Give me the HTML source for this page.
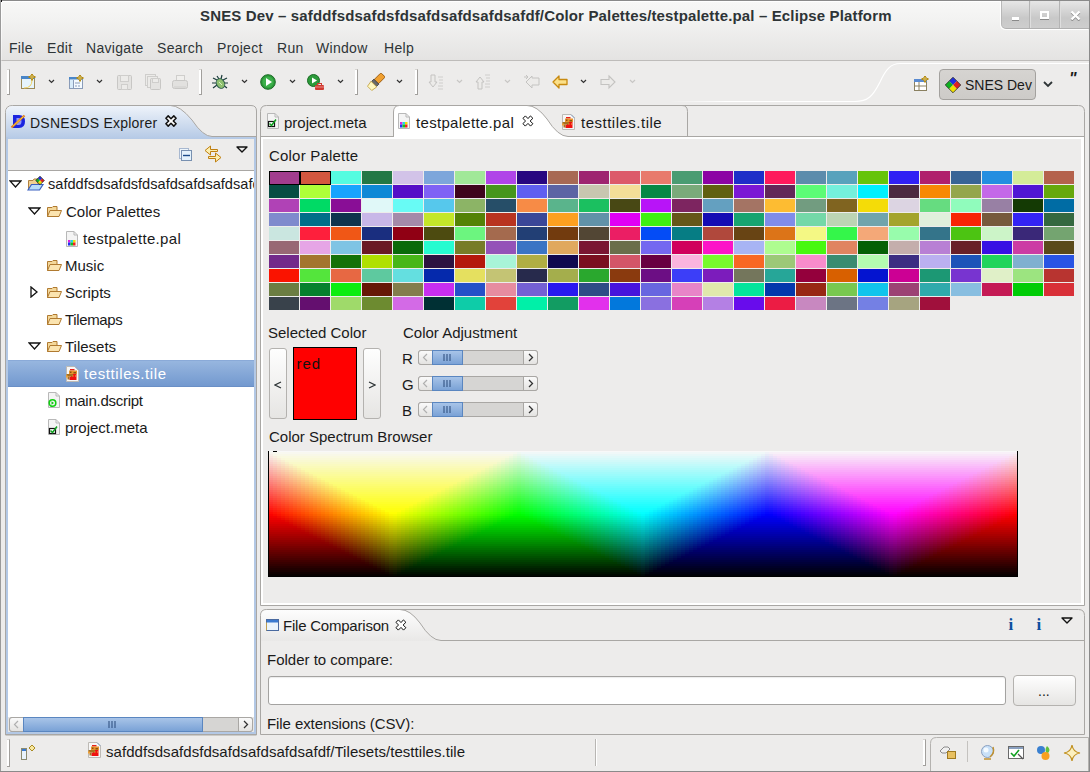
<!DOCTYPE html>
<html><head><meta charset="utf-8">
<style>
*{box-sizing:border-box}
html,body{margin:0;padding:0}
body{width:1090px;height:772px;overflow:hidden;position:relative;background:#edeceb;font-family:"Liberation Sans",sans-serif;font-size:14px;color:#1a1a1a}
.a{position:absolute}
.t{position:absolute;white-space:nowrap;line-height:1}
#hdr{left:0;top:0;width:1090px;height:61px;background:linear-gradient(#f8f8f7,#f2f2f1 35%,#e4e3e2);border-bottom:1px solid #bebcba}
#title{left:200px;top:8px;font-weight:bold;font-size:15px;letter-spacing:.15px;color:#2e3436}
#wbtn{left:1001px;top:0;width:88px;height:29px;border-left:1px solid #b8b8b8;border-bottom:1px solid #b0b0b0;border-bottom-left-radius:5px;background:linear-gradient(#e8e8e8,#c8c8c8 65%,#cdcdcd);box-shadow:-1px 1px 0 #fff}
.menu{top:41px;font-size:14px;letter-spacing:.3px;color:#2e3436}
.grip{width:3px;height:26px;border-right:1px solid #a19f9c;border-bottom:1px solid #a19f9c;background:#fff;border-top:1px solid #d8d6d3}
.tr{font-size:15px;color:#1a1a1a}
.btn{border:1px solid #b4b2af;border-radius:3px;background:linear-gradient(#fefefe,#e6e5e3)}
.grid i{position:absolute;width:30px;height:13px;display:block}
</style></head><body>
<div id="hdr" class="a"></div>
<div id="title" class="t">SNES Dev – safddfsdsafdsfdsafdsafdsafdsafdf/Color Palettes/testpalette.pal – Eclipse Platform</div>
<div id="wbtn" class="a"></div>
<div class="a" style="left:1029px;top:1px;width:1px;height:27px;background:#b4b4b4;box-shadow:1px 0 0 #dedede"></div>
<div class="a" style="left:1059px;top:1px;width:1px;height:27px;background:#b4b4b4;box-shadow:1px 0 0 #dedede"></div>
<div class="a" style="left:1012px;top:17px;width:7px;height:3px;background:#fff;box-shadow:0 1px 0 #8a8a8a"></div>
<div class="a" style="left:1040px;top:11px;width:9px;height:8px;border:2px solid #fff;box-shadow:0 1px 0 #8a8a8a"></div>
<svg class="a" style="left:1069.5px;top:10px" width="11" height="11"><path d="M1.5 2.5L9.5 10.5M9.5 2.5L1.5 10.5" stroke="#8a8a8a" stroke-width="2.4"/><path d="M1.5 1.5L9.5 9.5M9.5 1.5L1.5 9.5" stroke="#fff" stroke-width="2.4"/></svg>
<div class="a" style="left:0;top:0;width:1090px;height:1px;background:#8a8a8a"></div>
<div class="a" style="left:1px;top:1px;width:1000px;height:1px;background:#fff"></div>
<div class="a" style="left:1px;top:1px;width:1px;height:60px;background:linear-gradient(#fff,rgba(255,255,255,.3))"></div>
<div class="a" style="left:0;top:0;width:2px;height:2px;background:#111"></div>
<div class="t menu" style="left:9px">File</div>
<div class="t menu" style="left:47px">Edit</div>
<div class="t menu" style="left:86px">Navigate</div>
<div class="t menu" style="left:157px">Search</div>
<div class="t menu" style="left:217px">Project</div>
<div class="t menu" style="left:277px">Run</div>
<div class="t menu" style="left:316px">Window</div>
<div class="t menu" style="left:384px">Help</div>

<!-- toolbar -->
<div class="grip a" style="left:7px;top:69px"></div>
<div class="grip a" style="left:199px;top:69px"></div>
<div class="grip a" style="left:355px;top:69px"></div>
<div class="grip a" style="left:415px;top:69px"></div>
<svg class="a" style="left:20px;top:74px" width="17" height="16"><rect x="1.5" y="2.5" width="13" height="12" fill="#e6f4fc" stroke="#9c8a58"/><rect x="1" y="2" width="14" height="3" fill="#4a86c8"/><path d="M4 14Q12 14 12 6" stroke="#f0d060" fill="none"/><path d="M12 -.5Q12.5 2.5 15.5 3Q12.5 3.5 12 6.5Q11.5 3.5 8.5 3Q11.5 2.5 12 -.5Z" fill="#fbeeb0" stroke="#b38a12" stroke-width="1" stroke-linejoin="round"/><path d="M12 1V5M10 3H14" stroke="#b38a12" stroke-width=".8"/></svg>
<svg class="chev a" style="left:48px;top:79px" width="7" height="5"><path d="M1 1L3.5 3.5L6 1" stroke="#333" stroke-width="1.2" fill="none"/></svg>
<svg class="a" style="left:68px;top:75px" width="17" height="15"><rect x="1.5" y="2.5" width="13" height="11" fill="#f4faff" stroke="#8a9cb8"/><rect x="1" y="2" width="14" height="2.5" fill="#4a86c8"/><rect x="2" y="5" width="3" height="8" fill="#d8ecfa"/><path d="M5.5 5V13" stroke="#8a9cb8"/><path d="M7 8H12M7 11H9M10 11H12" stroke="#8a9cb8"/><path d="M12 -.5Q12.5 2.5 15.5 3Q12.5 3.5 12 6.5Q11.5 3.5 8.5 3Q11.5 2.5 12 -.5Z" fill="#fbeeb0" stroke="#b38a12" stroke-width="1" stroke-linejoin="round"/><path d="M12 1V5M10 3H14" stroke="#b38a12" stroke-width=".8"/></svg>
<svg class="chev a" style="left:96px;top:79px" width="7" height="5"><path d="M1 1L3.5 3.5L6 1" stroke="#333" stroke-width="1.2" fill="none"/></svg>
<svg class="a" style="left:117px;top:75px" width="16" height="15"><rect x=".5" y=".5" width="14" height="14" rx="1" fill="#e4e3e1" stroke="#c8c7c5"/><rect x="3.5" y=".5" width="8" height="6" fill="#ecebe9" stroke="#cfcecc"/><rect x="4.5" y="9.5" width="6" height="5" fill="#ecebe9" stroke="#cfcecc"/></svg>
<svg class="a" style="left:145px;top:74px" width="17" height="16"><rect x=".5" y=".5" width="10" height="11" fill="#ecebe9" stroke="#cfcecc"/><rect x="2.5" y="2.5" width="10" height="11" fill="#ecebe9" stroke="#cfcecc"/><rect x="5.5" y="4.5" width="10" height="11" rx="1" fill="#e4e3e1" stroke="#c8c7c5"/><rect x="7.5" y="4.5" width="6" height="4" fill="#ecebe9" stroke="#cfcecc"/></svg>
<svg class="a" style="left:172px;top:75px" width="17" height="15"><rect x="4.5" y=".5" width="8" height="7" fill="#f0efed" stroke="#cfcecc"/><rect x=".5" y="5.5" width="15" height="8" rx="2" fill="#e2e1df" stroke="#c8c7c5"/><path d="M2 12H14" stroke="#d0cfcd"/></svg>
<svg class="a" style="left:211px;top:74px" width="18" height="17"><g stroke="#1a3a3a" stroke-width="1.2"><path d="M2 4L6 6M1 9H5M2 14L6 11M16 4L12 6M17 9H13M16 14L12 11M6 2L8 5M11 1L10 5"/></g><ellipse cx="9.5" cy="9.5" rx="4" ry="5" fill="#8ec070" stroke="#2a5a4a" transform="rotate(-30 9.5 9.5)"/><path d="M8 8L11 11" stroke="#d8f0c0"/></svg>
<svg class="chev a" style="left:241px;top:79px" width="7" height="5"><path d="M1 1L3.5 3.5L6 1" stroke="#333" stroke-width="1.2" fill="none"/></svg>
<svg class="a" style="left:260px;top:74px" width="16" height="16"><circle cx="8" cy="8" r="7.3" fill="#2c9a3a" stroke="#1a6a24"/><circle cx="8" cy="8" r="5.5" fill="#3cb04a"/><path d="M6 4L12 8L6 12Z" fill="#fff"/></svg>
<svg class="chev a" style="left:289px;top:79px" width="7" height="5"><path d="M1 1L3.5 3.5L6 1" stroke="#333" stroke-width="1.2" fill="none"/></svg>
<svg class="a" style="left:307px;top:74px" width="18" height="17"><circle cx="6.5" cy="6.5" r="6" fill="#2c9a3a" stroke="#1a6a24"/><path d="M5 3.5L10 6.5L5 9.5Z" fill="#fff"/><rect x="8" y="11" width="9" height="5" rx="1" fill="#d03a30"/><path d="M8 13H17" stroke="#f0a0a0" stroke-width=".8"/><rect x="10.5" y="9.5" width="4" height="2" fill="none" stroke="#d03a30"/></svg>
<svg class="chev a" style="left:337px;top:79px" width="7" height="5"><path d="M1 1L3.5 3.5L6 1" stroke="#333" stroke-width="1.2" fill="none"/></svg>
<svg class="a" style="left:367px;top:73px" width="18" height="18"><g transform="rotate(45 9 9)"><rect x="6" y="-1" width="6" height="10" rx="1" fill="#f0a030" stroke="#9a5a10" stroke-width=".9"/><rect x="5.5" y="8.5" width="7" height="3.5" fill="#6a6a6a" stroke="#3a3a3a" stroke-width=".8"/><path d="M5 12H13L12 18H6Z" fill="#fff8c0" stroke="#c0a040" stroke-width=".8"/></g></svg>
<svg class="chev a" style="left:396px;top:79px" width="7" height="5"><path d="M1 1L3.5 3.5L6 1" stroke="#333" stroke-width="1.2" fill="none"/></svg>
<svg class="a" style="left:428px;top:74px" width="16" height="16"><path d="M3 1V8H1L5 13L9 8H7V1Z" fill="#ecebe9" stroke="#c4c3c1"/><path d="M10 3H15M11 6H15M11 9H15M10 12H15M10 15H15" stroke="#cfcecc"/></svg>
<svg class="chev a" style="left:456px;top:79px" width="7" height="5"><path d="M1 1L3.5 3.5L6 1" stroke="#c8c7c5" stroke-width="1.2" fill="none"/></svg>
<svg class="a" style="left:475px;top:74px" width="16" height="16"><path d="M3 15V8H1L5 3L9 8H7V15Z" fill="#ecebe9" stroke="#c4c3c1"/><path d="M10 1H15M11 4H15M11 7H15M10 10H15M10 13H15" stroke="#cfcecc"/></svg>
<svg class="chev a" style="left:504px;top:79px" width="7" height="5"><path d="M1 1L3.5 3.5L6 1" stroke="#c8c7c5" stroke-width="1.2" fill="none"/></svg>
<svg class="a" style="left:523px;top:74px" width="18" height="16"><path d="M9 4H16V11H9V14L3 8L9 2Z" fill="#ecebe9" stroke="#c4c3c1"/><path d="M3 1L5 3M1 3H5M3 5L5 3" stroke="#c4c3c1"/></svg>
<svg class="a" style="left:552px;top:74px" width="16" height="16"><path d="M7 2L1 8L7 14V10.5H15V5.5H7Z" fill="#fbe08a" stroke="#c88a10" stroke-width="1.3" stroke-linejoin="round"/></svg>
<svg class="chev a" style="left:580px;top:79px" width="7" height="5"><path d="M1 1L3.5 3.5L6 1" stroke="#333" stroke-width="1.2" fill="none"/></svg>
<svg class="a" style="left:600px;top:74px" width="16" height="16"><path d="M9 2L15 8L9 14V10.5H1V5.5H9Z" fill="#ecebe9" stroke="#c4c3c1" stroke-width="1.1"/></svg>
<svg class="chev a" style="left:629px;top:79px" width="7" height="5"><path d="M1 1L3.5 3.5L6 1" stroke="#c8c7c5" stroke-width="1.2" fill="none"/></svg>

<!-- perspective switcher -->
<svg class="a" style="left:660px;top:60px" width="430" height="45"><defs><linearGradient id="pg" gradientUnits="userSpaceOnUse" x1="10" x2="196" y1="0" y2="0"><stop offset="0" stop-color="#fff" stop-opacity="0"/><stop offset=".3" stop-color="#fff"/></linearGradient></defs><path d="M10 41.5H196" stroke="url(#pg)" stroke-width="1.2"/><path d="M195 41.5C208 41.5 213 36 220 22C226 9 231 3.5 240 3.5H430" stroke="#fff" stroke-width="1.2" fill="none"/></svg>
<svg class="a" style="left:913px;top:76px" width="16" height="16"><rect x="1.5" y="3.5" width="12" height="11" fill="#fff" stroke="#8a8060"/><rect x="1" y="3" width="13" height="3" fill="#5a8ad0"/><path d="M6 6V14M2 10H13" stroke="#8a8060"/><path d="M12 -.5Q12.5 2.5 15.5 3Q12.5 3.5 12 6.5Q11.5 3.5 8.5 3Q11.5 2.5 12 -.5Z" fill="#fbeeb0" stroke="#b38a12" stroke-width="1" stroke-linejoin="round"/><path d="M12 1V5M10 3H14" stroke="#b38a12" stroke-width=".8"/></svg>
<div class="a" style="left:939px;top:69px;width:97px;height:31px;border:1px solid #a3a19e;border-radius:4px;background:linear-gradient(#d6d4d1,#cdcbc8)"></div>
<svg class="a" style="left:945px;top:77px" width="16" height="16"><g transform="rotate(45 8 8)"><rect x="2.5" y="2.5" width="5.5" height="5.5" fill="#2030e0"/><rect x="8" y="2.5" width="5.5" height="5.5" fill="#e02020"/><rect x="2.5" y="8" width="5.5" height="5.5" fill="#10b020"/><rect x="8" y="8" width="5.5" height="5.5" fill="#f0e000"/><rect x="2.5" y="2.5" width="11" height="11" fill="none" stroke="#333" stroke-width=".8"/></g></svg>
<div class="t" style="left:965px;top:78px;font-size:14px;color:#1a1a1a">SNES Dev</div>
<svg class="a" style="left:1043px;top:81px" width="10" height="7"><path d="M1 1L5 5L9 1" stroke="#2e3436" stroke-width="1.8" fill="none"/></svg>
<div class="t" style="left:1069px;top:71px;font-size:16px;font-weight:bold;font-style:italic;color:#1a1a1a">"</div>
<!-- left panel -->
<svg class="a" style="left:0;top:100px" width="260" height="640">
<defs><linearGradient id="tabg" x1="0" y1="0" x2="0" y2="1"><stop offset="0" stop-color="#eef3fa"/><stop offset="1" stop-color="#b3c8e5"/></linearGradient></defs>
<path d="M5.5 635V12.5Q5.5 5.5 12.5 5.5H251Q256.5 5.5 256.5 11V635Z" fill="#edeceb" stroke="#a9a7a4"/>
<path d="M6 37V12.5Q6 6 12.5 6H170Q180 6 192 20Q203 36.5 212 36.5H256V40H6Z" fill="url(#tabg)"/>
<path d="M170.5 5.5Q180 5.5 192 20Q203 36.5 212 36.5H256" stroke="#a9a7a4" fill="none"/>
<rect x="6" y="37" width="2" height="597" fill="#b3c8e5"/>
<rect x="254" y="37" width="2" height="597" fill="#b3c8e5"/>
<rect x="6" y="632" width="250" height="2" fill="#b3c8e5"/>
<rect x="8" y="39" width="246" height="31" fill="#edeceb"/>
<rect x="8" y="70" width="246" height="1" fill="#a9a7a4"/>
<rect x="8" y="71" width="246" height="546" fill="#fff"/>
<rect x="8" y="617" width="246" height="15" fill="#e8e7e6"/>
</svg>
<svg class="a" style="left:10px;top:114px" width="18" height="15"><path d="M3 1H9Q15 1 15 7.5Q15 14 9 14H3Z" fill="#1a24e0"/><path d="M6.5 4V11H8.5Q11.5 11 11.5 7.5Q11.5 4 8.5 4Z" fill="#9098f8"/><path d="M1.5 13.5L14.5 1.5" stroke="#e07a20" stroke-width="2.2"/><path d="M3 12.2L13.5 2.5" stroke="#f8e040" stroke-width="0.9"/></svg>
<div class="t" style="left:30px;top:116px;font-size:14px;letter-spacing:.23px;color:#1a1a1a" id="t_exp">DSNESDS Explorer</div>
<svg class="a" style="left:165px;top:115px" width="12" height="12"><path d="M8.8 0.9L11.1 3.2L8.3 6.0L11.1 8.8L8.8 11.1L6.0 8.3L3.2 11.1L0.9 8.8L3.7 6.0L0.9 3.2L3.2 0.9L6.0 3.7Z" fill="#fff" stroke="#111" stroke-width="1.5" stroke-linejoin="round"/></svg>
<svg class="a" style="left:178px;top:147px" width="15" height="15"><rect x="1.5" y="1.5" width="9" height="10" fill="#eef6fc" stroke="#a8b8d0"/><rect x="3.5" y="3.5" width="10" height="10" fill="#e4f2fc" stroke="#7890b0"/><path d="M5 8.5H12" stroke="#1a4a8a" stroke-width="1.4"/></svg>
<svg class="a" style="left:204px;top:145px" width="18" height="18"><path d="M1 5.5L6.5 1V4.5H13.5V6.5H6.5V10Z" fill="#fcefb0" stroke="#c08010" stroke-width="1" stroke-linejoin="round"/><path d="M17 12.5L11.5 8V11.5H4.5V13.5H11.5V17Z" fill="#fcefb0" stroke="#c08010" stroke-width="1" stroke-linejoin="round"/></svg>
<svg class="a" style="left:236px;top:146px" width="12" height="7"><path d="M1 1H11L6 6Z" fill="none" stroke="#111" stroke-width="1.4" stroke-linejoin="round"/></svg>
<!-- tree -->
<svg class="a tri" style="left:9px;top:180px" width="13" height="8"><path d="M1 1H12L6.5 7Z" fill="none" stroke="#111" stroke-width="1.3"/></svg>
<svg class="a" style="left:27px;top:176px" width="18" height="16"><path d="M1.5 4.5H6L7 3H11V13H1.5Z" fill="#f0d090" stroke="#b08040"/><path d="M1 14L4.5 8.5H16L12.5 14Z" fill="#b8dcf8" stroke="#3a60c0" stroke-width="1.2"/><g transform="rotate(45 13 4.5)"><rect x="10" y="1.5" width="3" height="3" fill="#2030e0"/><rect x="13" y="1.5" width="3" height="3" fill="#e02020"/><rect x="10" y="4.5" width="3" height="3" fill="#10b020"/><rect x="13" y="4.5" width="3" height="3" fill="#f0e000"/><rect x="10" y="1.5" width="6" height="6" fill="none" stroke="#111" stroke-width=".7"/></g></svg>
<div class="t tr" style="left:48px;top:177px;width:206px;overflow:hidden;font-size:14.6px">safddfsdsafdsfdsafdsafdsafdsafdf</div>
<svg class="a tri" style="left:28px;top:207px" width="13" height="8"><path d="M1 1H12L6.5 7Z" fill="none" stroke="#111" stroke-width="1.3"/></svg>
<svg class="a fold" style="left:46px;top:205px" width="17" height="13"><path d="M1.5 2.5H6L7 1.5H11V11.5H1.5Z" fill="#f4d89a" stroke="#b07a30"/><path d="M1.5 11.5L4 5.5H15.5L13 11.5Z" fill="#fbe4b0" stroke="#b07a30"/></svg>
<div class="t tr" style="left:66px;top:204px">Color Palettes</div>
<svg class="a" style="left:65px;top:231px" width="14" height="17"><path d="M1.5 .5H9L12.5 4V15.5H1.5Z" fill="#f4f4f4" stroke="#b8b8b8"/><path d="M9 .5V4H12.5" fill="none" stroke="#b8b8b8"/><rect x="3" y="9" width="2.5" height="2.5" fill="#e020e0"/><rect x="5.5" y="9" width="2.5" height="2.5" fill="#20d8e8"/><rect x="8" y="9" width="2.5" height="2.5" fill="#f0e000"/><rect x="3" y="11.5" width="2.5" height="3" fill="#2030f0"/><rect x="5.5" y="11.5" width="2.5" height="3" fill="#10c020"/><rect x="8" y="11.5" width="2.5" height="3" fill="#f02020"/></svg>
<div class="t tr" style="left:83px;top:231px;letter-spacing:.31px">testpalette.pal</div>
<svg class="a fold" style="left:46px;top:259px" width="17" height="13"><path d="M1.5 2.5H6L7 1.5H11V11.5H1.5Z" fill="#f4d89a" stroke="#b07a30"/><path d="M1.5 11.5L4 5.5H15.5L13 11.5Z" fill="#fbe4b0" stroke="#b07a30"/></svg>
<div class="t tr" style="left:65px;top:258px">Music</div>
<svg class="a tri" style="left:30px;top:286px" width="8" height="12"><path d="M1 1V11L7 6Z" fill="none" stroke="#111" stroke-width="1.3"/></svg>
<svg class="a fold" style="left:46px;top:286px" width="17" height="13"><path d="M1.5 2.5H6L7 1.5H11V11.5H1.5Z" fill="#f4d89a" stroke="#b07a30"/><path d="M1.5 11.5L4 5.5H15.5L13 11.5Z" fill="#fbe4b0" stroke="#b07a30"/></svg>
<div class="t tr" style="left:65px;top:285px">Scripts</div>
<svg class="a fold" style="left:46px;top:313px" width="17" height="13"><path d="M1.5 2.5H6L7 1.5H11V11.5H1.5Z" fill="#f4d89a" stroke="#b07a30"/><path d="M1.5 11.5L4 5.5H15.5L13 11.5Z" fill="#fbe4b0" stroke="#b07a30"/></svg>
<div class="t tr" style="left:65px;top:312px;letter-spacing:-.36px">Tilemaps</div>
<svg class="a tri" style="left:28px;top:342px" width="13" height="8"><path d="M1 1H12L6.5 7Z" fill="none" stroke="#111" stroke-width="1.3"/></svg>
<svg class="a fold" style="left:46px;top:340px" width="17" height="13"><path d="M1.5 2.5H6L7 1.5H11V11.5H1.5Z" fill="#f4d89a" stroke="#b07a30"/><path d="M1.5 11.5L4 5.5H15.5L13 11.5Z" fill="#fbe4b0" stroke="#b07a30"/></svg>
<div class="t tr" style="left:65px;top:339px">Tilesets</div>
<div class="a" style="left:8px;top:360px;width:246px;height:27px;background:linear-gradient(#97b6df,#7399cf);border-top:1px solid #8aaad8;border-bottom:1px solid #6a8fc6"></div>
<svg class="a" style="left:65px;top:365px" width="15" height="18"><path d="M1.5 1.5H10L13.5 5V16.5H1.5Z" fill="#f6f6f6" stroke="#bdbab5"/><path d="M10 1.5L13.5 5" stroke="#8aa0c0"/><rect x="5" y="4" width="4.5" height="1.5" fill="#e8201a"/><rect x="4" y="5.5" width="8" height="3.5" fill="#e8922c"/><rect x="5" y="6.5" width="1.5" height="1.5" fill="#8a5010"/><rect x="8.5" y="7" width="2.5" height="1.5" fill="#8a5010"/><path d="M6 9H11.5V15H4.5V11.5H6Z" fill="#f01010"/><rect x="1.5" y="9" width="6.5" height="2.5" fill="#a8701e"/><rect x="2.5" y="11.5" width="2" height="3" fill="#a8701e"/><rect x="1" y="10.5" width="1.8" height="2" fill="#f4a030"/><rect x="7.5" y="10.5" width="1" height="1" fill="#f0c040"/><rect x="10" y="10.5" width="1" height="1" fill="#f0c040"/></svg>
<div class="t tr" style="left:84px;top:366px;color:#fff;letter-spacing:.6px">testtiles.tile</div>
<svg class="a" style="left:47px;top:392px" width="14" height="17"><path d="M1.5 .5H9L12.5 4V15.5H1.5Z" fill="#f4f4f4" stroke="#b8b8b8"/><path d="M9 .5V4H12.5" fill="none" stroke="#b8b8b8"/><circle cx="5.5" cy="11" r="3.3" fill="none" stroke="#10d010" stroke-width="1.6"/><path d="M4.5 9.3L7 11L4.5 12.7Z" fill="#10c010"/></svg>
<div class="t tr" style="left:65px;top:393px;letter-spacing:-.26px">main.dscript</div>
<svg class="a" style="left:47px;top:419px" width="14" height="17"><path d="M1.5 .5H9L12.5 4V15.5H1.5Z" fill="#f4f4f4" stroke="#b8b8b8"/><path d="M9 .5V4H12.5" fill="none" stroke="#b8b8b8"/><rect x="2.5" y="9.5" width="6" height="5" fill="#fff" stroke="#111" stroke-width="1.2"/><path d="M3.5 11.5L5.5 13.5L10 7.5" stroke="#10a020" stroke-width="1.5" fill="none"/></svg>
<div class="t tr" style="left:65px;top:420px">project.meta</div>
<!-- h scrollbar -->
<div class="a" style="left:9px;top:717px;width:244px;height:15px;border:1px solid #a9a7a4;border-radius:3px;background:#d6d5d3"></div>
<div class="a" style="left:9px;top:717px;width:15px;height:15px;border:1px solid #a9a7a4;border-radius:3px 0 0 3px;background:linear-gradient(#fafafa,#e4e3e1)"></div>
<svg class="a" style="left:13px;top:720px" width="6" height="9"><path d="M5 1L1.5 4.5L5 8" stroke="#b0b0b0" fill="none" stroke-width="1.2"/></svg>
<div class="a" style="left:23px;top:717px;width:180px;height:15px;border:1px solid #5a86c0;background:linear-gradient(#a8c4e8,#7aa2d6)"></div>
<svg class="a" style="left:108px;top:721px" width="8" height="7"><path d="M1 0V7M4 0V7M7 0V7" stroke="#3a5a8a" stroke-width="1.2"/></svg>
<div class="a" style="left:238px;top:717px;width:15px;height:15px;border:1px solid #a9a7a4;border-radius:0 3px 3px 0;background:linear-gradient(#fafafa,#e4e3e1)"></div>
<svg class="a" style="left:243px;top:720px" width="6" height="9"><path d="M1 1L4.5 4.5L1 8" stroke="#333" fill="none" stroke-width="1.3"/></svg>

<!-- editor -->
<svg class="a" style="left:255px;top:100px" width="835" height="510">
<path d="M5.5 505.5V11.5Q5.5 5.5 11.5 5.5H823.5Q829.5 5.5 829.5 11.5V505.5Z" fill="#edeceb" stroke="#a9a7a4"/>
<path d="M6 36.5H138.5M313 36.5H829" stroke="#a9a7a4"/>
<path d="M432.5 36.5V11.5Q432.5 5.5 427 5.5" stroke="#a9a7a4" fill="none"/>
<path d="M138 37V12Q138 5.5 144 5.5H272Q282 5.5 292 19Q303 36.5 313 36.5V38H138Z" fill="#fff"/>
<path d="M138.5 37V12Q138.5 5.5 144.5 5.5H272Q282 5.5 292 19Q303 36.5 313 36.5" stroke="#a9a7a4" fill="none"/>
<rect x="6" y="37" width="2" height="468" fill="#fff"/>
<rect x="826" y="37" width="3" height="468" fill="#fff"/>
<rect x="6" y="37" width="823" height="2" fill="#fff"/>
<rect x="6" y="503" width="823" height="2" fill="#fff"/>
</svg>
<svg class="a" style="left:266px;top:113px" width="14" height="17"><path d="M1.5 .5H9L12.5 4V15.5H1.5Z" fill="#f4f4f4" stroke="#b8b8b8"/><path d="M9 .5V4H12.5" fill="none" stroke="#b8b8b8"/><rect x="2.5" y="8.5" width="6" height="5" fill="#fff" stroke="#111" stroke-width="1.2"/><path d="M3.5 10.5L5.5 12.5L10 6.5" stroke="#10a020" stroke-width="1.5" fill="none"/></svg>
<div class="t tr" style="left:284px;top:115px">project.meta</div>
<svg class="a" style="left:397px;top:113px" width="14" height="17"><path d="M1.5 .5H9L12.5 4V15.5H1.5Z" fill="#f4f4f4" stroke="#b8b8b8"/><path d="M9 .5V4H12.5" fill="none" stroke="#b8b8b8"/><rect x="3" y="9" width="2.5" height="2.5" fill="#e020e0"/><rect x="5.5" y="9" width="2.5" height="2.5" fill="#20d8e8"/><rect x="8" y="9" width="2.5" height="2.5" fill="#f0e000"/><rect x="3" y="11.5" width="2.5" height="3" fill="#2030f0"/><rect x="5.5" y="11.5" width="2.5" height="3" fill="#10c020"/><rect x="8" y="11.5" width="2.5" height="3" fill="#f02020"/></svg>
<div class="t tr" style="left:416px;top:115px;letter-spacing:.31px">testpalette.pal</div>
<svg class="a" style="left:522px;top:115px" width="12" height="12"><path d="M8.4 0.9L10.9 3.3L8.1 6.0L10.9 8.7L8.5 11.1L6.0 8.4L3.3 11.1L0.9 8.6L3.6 6.0L0.9 3.4L3.4 0.9L6.0 3.6Z" fill="#fff" stroke="#111" stroke-width="1" stroke-linejoin="round"/></svg>
<svg class="a" style="left:561px;top:113px" width="15" height="18"><path d="M1.5 1.5H10L13.5 5V16.5H1.5Z" fill="#f6f6f6" stroke="#bdbab5"/><path d="M10 1.5L13.5 5" stroke="#8aa0c0"/><rect x="5" y="4" width="4.5" height="1.5" fill="#e8201a"/><rect x="4" y="5.5" width="8" height="3.5" fill="#e8922c"/><rect x="5" y="6.5" width="1.5" height="1.5" fill="#8a5010"/><rect x="8.5" y="7" width="2.5" height="1.5" fill="#8a5010"/><path d="M6 9H11.5V15H4.5V11.5H6Z" fill="#f01010"/><rect x="1.5" y="9" width="6.5" height="2.5" fill="#a8701e"/><rect x="2.5" y="11.5" width="2" height="3" fill="#a8701e"/><rect x="1" y="10.5" width="1.8" height="2" fill="#f4a030"/><rect x="7.5" y="10.5" width="1" height="1" fill="#f0c040"/><rect x="10" y="10.5" width="1" height="1" fill="#f0c040"/></svg>
<div class="t tr" style="left:581px;top:115px;letter-spacing:.5px">testtiles.tile</div>
<div class="t tr" style="left:269px;top:148px;letter-spacing:.2px">Color Palette</div>
<div class="a grid" style="left:269px;top:171px">
<i style="left:0px;top:0px;background:#a23d8e"></i><i style="left:31px;top:0px;background:#d3573f"></i><i style="left:62px;top:0px;background:#55fce0"></i><i style="left:93px;top:0px;background:#237845"></i><i style="left:124px;top:0px;background:#d2c3e8"></i><i style="left:155px;top:0px;background:#7da6db"></i><i style="left:186px;top:0px;background:#a1e898"></i><i style="left:217px;top:0px;background:#b044e8"></i><i style="left:248px;top:0px;background:#270680"></i><i style="left:279px;top:0px;background:#a86954"></i><i style="left:310px;top:0px;background:#9e2470"></i><i style="left:341px;top:0px;background:#dc5a6a"></i><i style="left:372px;top:0px;background:#e87a6c"></i><i style="left:403px;top:0px;background:#4a9c72"></i><i style="left:434px;top:0px;background:#8c04a4"></i><i style="left:465px;top:0px;background:#1e2ec8"></i><i style="left:496px;top:0px;background:#fe1a5c"></i><i style="left:527px;top:0px;background:#5c8cac"></i><i style="left:558px;top:0px;background:#58a2bc"></i><i style="left:589px;top:0px;background:#66c40a"></i><i style="left:620px;top:0px;background:#3020f4"></i><i style="left:651px;top:0px;background:#b0206c"></i><i style="left:682px;top:0px;background:#386496"></i><i style="left:713px;top:0px;background:#248ee0"></i><i style="left:744px;top:0px;background:#d4ec98"></i><i style="left:775px;top:0px;background:#b4624c"></i><i style="left:0px;top:14px;background:#064d43"></i><i style="left:31px;top:14px;background:#aeff38"></i><i style="left:62px;top:14px;background:#18a4fe"></i><i style="left:93px;top:14px;background:#0e88d6"></i><i style="left:124px;top:14px;background:#550fc7"></i><i style="left:155px;top:14px;background:#7f62f5"></i><i style="left:186px;top:14px;background:#3e051c"></i><i style="left:217px;top:14px;background:#46961c"></i><i style="left:248px;top:14px;background:#5f5ff0"></i><i style="left:279px;top:14px;background:#5c64a4"></i><i style="left:310px;top:14px;background:#c8c6b0"></i><i style="left:341px;top:14px;background:#f4de98"></i><i style="left:372px;top:14px;background:#058845"></i><i style="left:403px;top:14px;background:#7aaa7a"></i><i style="left:434px;top:14px;background:#606010"></i><i style="left:465px;top:14px;background:#7a18d4"></i><i style="left:496px;top:14px;background:#622858"></i><i style="left:527px;top:14px;background:#5cfc76"></i><i style="left:558px;top:14px;background:#74f0dc"></i><i style="left:589px;top:14px;background:#00f0fe"></i><i style="left:620px;top:14px;background:#4c2a40"></i><i style="left:651px;top:14px;background:#f88804"></i><i style="left:682px;top:14px;background:#94a64c"></i><i style="left:713px;top:14px;background:#c468e8"></i><i style="left:744px;top:14px;background:#5016d4"></i><i style="left:775px;top:14px;background:#66a80c"></i><i style="left:0px;top:28px;background:#b042b6"></i><i style="left:31px;top:28px;background:#00da65"></i><i style="left:62px;top:28px;background:#890e96"></i><i style="left:93px;top:28px;background:#e0f8f8"></i><i style="left:124px;top:28px;background:#68fbf5"></i><i style="left:155px;top:28px;background:#56c8ec"></i><i style="left:186px;top:28px;background:#8cb466"></i><i style="left:217px;top:28px;background:#264e68"></i><i style="left:248px;top:28px;background:#f78b46"></i><i style="left:279px;top:28px;background:#5ab48c"></i><i style="left:310px;top:28px;background:#1bc060"></i><i style="left:341px;top:28px;background:#484814"></i><i style="left:372px;top:28px;background:#b814f8"></i><i style="left:403px;top:28px;background:#7d2560"></i><i style="left:434px;top:28px;background:#64a0c0"></i><i style="left:465px;top:28px;background:#a47464"></i><i style="left:496px;top:28px;background:#fdbc32"></i><i style="left:527px;top:28px;background:#729c80"></i><i style="left:558px;top:28px;background:#806420"></i><i style="left:589px;top:28px;background:#f4dc08"></i><i style="left:620px;top:28px;background:#dcd4e2"></i><i style="left:651px;top:28px;background:#66dc80"></i><i style="left:682px;top:28px;background:#90fcbc"></i><i style="left:713px;top:28px;background:#9880a4"></i><i style="left:744px;top:28px;background:#143a04"></i><i style="left:775px;top:28px;background:#006ca4"></i><i style="left:0px;top:42px;background:#7f8acd"></i><i style="left:31px;top:42px;background:#006f89"></i><i style="left:62px;top:42px;background:#0f344d"></i><i style="left:93px;top:42px;background:#c8b7e8"></i><i style="left:124px;top:42px;background:#a48aa9"></i><i style="left:155px;top:42px;background:#c4e72a"></i><i style="left:186px;top:42px;background:#548206"></i><i style="left:217px;top:42px;background:#b83320"></i><i style="left:248px;top:42px;background:#3a4798"></i><i style="left:279px;top:42px;background:#fca020"></i><i style="left:310px;top:42px;background:#6192a8"></i><i style="left:341px;top:42px;background:#e000f4"></i><i style="left:372px;top:42px;background:#3ff012"></i><i style="left:403px;top:42px;background:#655719"></i><i style="left:434px;top:42px;background:#140cb4"></i><i style="left:465px;top:42px;background:#18a470"></i><i style="left:496px;top:42px;background:#808ce8"></i><i style="left:527px;top:42px;background:#74d8a8"></i><i style="left:558px;top:42px;background:#bcd4b4"></i><i style="left:589px;top:42px;background:#70a4ac"></i><i style="left:620px;top:42px;background:#a4a42c"></i><i style="left:651px;top:42px;background:#e0f0dc"></i><i style="left:682px;top:42px;background:#f82404"></i><i style="left:713px;top:42px;background:#765a3c"></i><i style="left:744px;top:42px;background:#3424f4"></i><i style="left:775px;top:42px;background:#346840"></i><i style="left:0px;top:56px;background:#cae6e0"></i><i style="left:31px;top:56px;background:#fe1f3c"></i><i style="left:62px;top:56px;background:#f05716"></i><i style="left:93px;top:56px;background:#1a2e7f"></i><i style="left:124px;top:56px;background:#900014"></i><i style="left:155px;top:56px;background:#4d4b10"></i><i style="left:186px;top:56px;background:#6cf57f"></i><i style="left:217px;top:56px;background:#a46a4e"></i><i style="left:248px;top:56px;background:#223f75"></i><i style="left:279px;top:56px;background:#723b0e"></i><i style="left:310px;top:56px;background:#524634"></i><i style="left:341px;top:56px;background:#eb1e64"></i><i style="left:372px;top:56px;background:#044cf6"></i><i style="left:403px;top:56px;background:#067d84"></i><i style="left:434px;top:56px;background:#b0483c"></i><i style="left:465px;top:56px;background:#684414"></i><i style="left:496px;top:56px;background:#dc7418"></i><i style="left:527px;top:56px;background:#f4f884"></i><i style="left:558px;top:56px;background:#34f64a"></i><i style="left:589px;top:56px;background:#f4a878"></i><i style="left:620px;top:56px;background:#98fcac"></i><i style="left:651px;top:56px;background:#34748a"></i><i style="left:682px;top:56px;background:#4cc412"></i><i style="left:713px;top:56px;background:#ccf4c8"></i><i style="left:744px;top:56px;background:#3a2878"></i><i style="left:775px;top:56px;background:#74a470"></i><i style="left:0px;top:70px;background:#986874"></i><i style="left:31px;top:70px;background:#e6a5e6"></i><i style="left:62px;top:70px;background:#7fc4e4"></i><i style="left:93px;top:70px;background:#6a1a24"></i><i style="left:124px;top:70px;background:#0a6a0a"></i><i style="left:155px;top:70px;background:#26fbd0"></i><i style="left:186px;top:70px;background:#777c28"></i><i style="left:217px;top:70px;background:#9452b8"></i><i style="left:248px;top:70px;background:#3a74c4"></i><i style="left:279px;top:70px;background:#e0a85e"></i><i style="left:310px;top:70px;background:#7a1632"></i><i style="left:341px;top:70px;background:#6a6e4a"></i><i style="left:372px;top:70px;background:#7468f0"></i><i style="left:403px;top:70px;background:#d0005c"></i><i style="left:434px;top:70px;background:#fc14c8"></i><i style="left:465px;top:70px;background:#a8b4f4"></i><i style="left:496px;top:70px;background:#aefc90"></i><i style="left:527px;top:70px;background:#48f810"></i><i style="left:558px;top:70px;background:#e08460"></i><i style="left:589px;top:70px;background:#046004"></i><i style="left:620px;top:70px;background:#c4aeac"></i><i style="left:651px;top:70px;background:#b880d4"></i><i style="left:682px;top:70px;background:#682028"></i><i style="left:713px;top:70px;background:#3810e4"></i><i style="left:744px;top:70px;background:#cc3ca4"></i><i style="left:775px;top:70px;background:#5a4a1a"></i><i style="left:0px;top:84px;background:#732a8a"></i><i style="left:31px;top:84px;background:#a3752e"></i><i style="left:62px;top:84px;background:#147208"></i><i style="left:93px;top:84px;background:#b0e000"></i><i style="left:124px;top:84px;background:#48b618"></i><i style="left:155px;top:84px;background:#2d1240"></i><i style="left:186px;top:84px;background:#b4170c"></i><i style="left:217px;top:84px;background:#a8f4d8"></i><i style="left:248px;top:84px;background:#b0ae44"></i><i style="left:279px;top:84px;background:#10084f"></i><i style="left:310px;top:84px;background:#7a0f20"></i><i style="left:341px;top:84px;background:#d35668"></i><i style="left:372px;top:84px;background:#680042"></i><i style="left:403px;top:84px;background:#fab4de"></i><i style="left:434px;top:84px;background:#78fa2c"></i><i style="left:465px;top:84px;background:#f86824"></i><i style="left:496px;top:84px;background:#9cc878"></i><i style="left:527px;top:84px;background:#f88ccc"></i><i style="left:558px;top:84px;background:#3a8c70"></i><i style="left:589px;top:84px;background:#b4fcb0"></i><i style="left:620px;top:84px;background:#3c2e82"></i><i style="left:651px;top:84px;background:#bab0f0"></i><i style="left:682px;top:84px;background:#1c54b8"></i><i style="left:713px;top:84px;background:#20d45c"></i><i style="left:744px;top:84px;background:#80b0d0"></i><i style="left:775px;top:84px;background:#2854e4"></i><i style="left:0px;top:98px;background:#fa1300"></i><i style="left:31px;top:98px;background:#54e53c"></i><i style="left:62px;top:98px;background:#e76843"></i><i style="left:93px;top:98px;background:#5ec99f"></i><i style="left:124px;top:98px;background:#64dfe0"></i><i style="left:155px;top:98px;background:#0529ac"></i><i style="left:186px;top:98px;background:#e5e05f"></i><i style="left:217px;top:98px;background:#c4c474"></i><i style="left:248px;top:98px;background:#272a4c"></i><i style="left:279px;top:98px;background:#a4ae4c"></i><i style="left:310px;top:98px;background:#2aa82e"></i><i style="left:341px;top:98px;background:#8a3a0e"></i><i style="left:372px;top:98px;background:#6c0e84"></i><i style="left:403px;top:98px;background:#3c3ef8"></i><i style="left:434px;top:98px;background:#7c1cbc"></i><i style="left:465px;top:98px;background:#74765c"></i><i style="left:496px;top:98px;background:#26a698"></i><i style="left:527px;top:98px;background:#94003c"></i><i style="left:558px;top:98px;background:#d86000"></i><i style="left:589px;top:98px;background:#0414d0"></i><i style="left:620px;top:98px;background:#cc0094"></i><i style="left:651px;top:98px;background:#1c9874"></i><i style="left:682px;top:98px;background:#7834d0"></i><i style="left:713px;top:98px;background:#e0f0c8"></i><i style="left:744px;top:98px;background:#9ce480"></i><i style="left:775px;top:98px;background:#b83430"></i><i style="left:0px;top:112px;background:#6b7d42"></i><i style="left:31px;top:112px;background:#06812e"></i><i style="left:62px;top:112px;background:#0ced10"></i><i style="left:93px;top:112px;background:#661806"></i><i style="left:124px;top:112px;background:#837d4c"></i><i style="left:155px;top:112px;background:#c82ef0"></i><i style="left:186px;top:112px;background:#2450c8"></i><i style="left:217px;top:112px;background:#e68ca0"></i><i style="left:248px;top:112px;background:#7460d4"></i><i style="left:279px;top:112px;background:#2818f0"></i><i style="left:310px;top:112px;background:#2e4c86"></i><i style="left:341px;top:112px;background:#4614dc"></i><i style="left:372px;top:112px;background:#6866e0"></i><i style="left:403px;top:112px;background:#e884c8"></i><i style="left:434px;top:112px;background:#e0e8ac"></i><i style="left:465px;top:112px;background:#04e49c"></i><i style="left:496px;top:112px;background:#0438ac"></i><i style="left:527px;top:112px;background:#982814"></i><i style="left:558px;top:112px;background:#78c850"></i><i style="left:589px;top:112px;background:#10c4ec"></i><i style="left:620px;top:112px;background:#9c4274"></i><i style="left:651px;top:112px;background:#30aaac"></i><i style="left:682px;top:112px;background:#88bee0"></i><i style="left:713px;top:112px;background:#c41a54"></i><i style="left:744px;top:112px;background:#00cc06"></i><i style="left:775px;top:112px;background:#d83038"></i><i style="left:0px;top:126px;background:#39424b"></i><i style="left:31px;top:126px;background:#640f6f"></i><i style="left:62px;top:126px;background:#9fda6a"></i><i style="left:93px;top:126px;background:#6d8b30"></i><i style="left:124px;top:126px;background:#d36ae6"></i><i style="left:155px;top:126px;background:#003034"></i><i style="left:186px;top:126px;background:#0ecca8"></i><i style="left:217px;top:126px;background:#e2423a"></i><i style="left:248px;top:126px;background:#00f0a8"></i><i style="left:279px;top:126px;background:#129c62"></i><i style="left:310px;top:126px;background:#e230ec"></i><i style="left:341px;top:126px;background:#0278dc"></i><i style="left:372px;top:126px;background:#8a70e0"></i><i style="left:403px;top:126px;background:#d640b8"></i><i style="left:434px;top:126px;background:#b480e4"></i><i style="left:465px;top:126px;background:#680cec"></i><i style="left:496px;top:126px;background:#ec1c44"></i><i style="left:527px;top:126px;background:#c888c0"></i><i style="left:558px;top:126px;background:#6c7484"></i><i style="left:589px;top:126px;background:#7480e4"></i><i style="left:620px;top:126px;background:#a6a480"></i><i style="left:651px;top:126px;background:#a0103c"></i></div>
<div class="a" style="left:269px;top:171px;width:62px;height:14px;border:1px solid #000"></div>
<div class="a" style="left:299px;top:171px;width:2px;height:14px;background:#000"></div>
<div class="t tr" style="left:268px;top:325px">Selected Color</div>
<div class="btn a" style="left:269px;top:348px;width:18px;height:71px"></div>
<svg class="a" style="left:274px;top:381px" width="8" height="8"><path d="M7 1L1 4L7 7" stroke="#2e3436" stroke-width="1.2" fill="none"/></svg>
<div class="a" style="left:293px;top:347px;width:64px;height:73px;border:1px solid #000;background:#f00"></div>
<div class="t tr" style="left:296.5px;top:356px;color:#111;letter-spacing:1px">red</div>
<div class="btn a" style="left:363px;top:348px;width:18px;height:71px"></div>
<svg class="a" style="left:368px;top:381px" width="8" height="8"><path d="M1 1L7 4L1 7" stroke="#2e3436" stroke-width="1.2" fill="none"/></svg>
<div class="t tr" style="left:403px;top:325px">Color Adjustment</div>
<div class="t tr" style="left:402px;top:351px">R</div>
<div class="t tr" style="left:402px;top:377px">G</div>
<div class="t tr" style="left:402px;top:403px">B</div>
<div class="a" style="left:418px;top:350px;width:120px;height:15px;border:1px solid #a9a7a4;border-radius:3px;background:#d6d5d3"></div>
<div class="a" style="left:418px;top:350px;width:15px;height:15px;border:1px solid #a9a7a4;border-radius:3px 0 0 3px;background:linear-gradient(#fafafa,#e4e3e1)"></div>
<svg class="a" style="left:422px;top:353px" width="6" height="9"><path d="M5 1L1.5 4.5L5 8" stroke="#b0b0b0" fill="none" stroke-width="1.2"/></svg>
<div class="a" style="left:432px;top:350px;width:31px;height:15px;border:1px solid #5a86c0;background:linear-gradient(#a8c4e8,#7aa2d6)"></div>
<svg class="a" style="left:443px;top:354px" width="8" height="7"><path d="M1 0V7M4 0V7M7 0V7" stroke="#3a5a8a" stroke-width="1.2"/></svg>
<div class="a" style="left:523px;top:350px;width:15px;height:15px;border:1px solid #a9a7a4;border-radius:0 3px 3px 0;background:linear-gradient(#fafafa,#e4e3e1)"></div>
<svg class="a" style="left:528px;top:353px" width="6" height="9"><path d="M1 1L4.5 4.5L1 8" stroke="#333" fill="none" stroke-width="1.3"/></svg>
<div class="a" style="left:418px;top:376px;width:120px;height:15px;border:1px solid #a9a7a4;border-radius:3px;background:#d6d5d3"></div>
<div class="a" style="left:418px;top:376px;width:15px;height:15px;border:1px solid #a9a7a4;border-radius:3px 0 0 3px;background:linear-gradient(#fafafa,#e4e3e1)"></div>
<svg class="a" style="left:422px;top:379px" width="6" height="9"><path d="M5 1L1.5 4.5L5 8" stroke="#b0b0b0" fill="none" stroke-width="1.2"/></svg>
<div class="a" style="left:432px;top:376px;width:31px;height:15px;border:1px solid #5a86c0;background:linear-gradient(#a8c4e8,#7aa2d6)"></div>
<svg class="a" style="left:443px;top:380px" width="8" height="7"><path d="M1 0V7M4 0V7M7 0V7" stroke="#3a5a8a" stroke-width="1.2"/></svg>
<div class="a" style="left:523px;top:376px;width:15px;height:15px;border:1px solid #a9a7a4;border-radius:0 3px 3px 0;background:linear-gradient(#fafafa,#e4e3e1)"></div>
<svg class="a" style="left:528px;top:379px" width="6" height="9"><path d="M1 1L4.5 4.5L1 8" stroke="#333" fill="none" stroke-width="1.3"/></svg>
<div class="a" style="left:418px;top:402px;width:120px;height:15px;border:1px solid #a9a7a4;border-radius:3px;background:#d6d5d3"></div>
<div class="a" style="left:418px;top:402px;width:15px;height:15px;border:1px solid #a9a7a4;border-radius:3px 0 0 3px;background:linear-gradient(#fafafa,#e4e3e1)"></div>
<svg class="a" style="left:422px;top:405px" width="6" height="9"><path d="M5 1L1.5 4.5L5 8" stroke="#b0b0b0" fill="none" stroke-width="1.2"/></svg>
<div class="a" style="left:432px;top:402px;width:31px;height:15px;border:1px solid #5a86c0;background:linear-gradient(#a8c4e8,#7aa2d6)"></div>
<svg class="a" style="left:443px;top:406px" width="8" height="7"><path d="M1 0V7M4 0V7M7 0V7" stroke="#3a5a8a" stroke-width="1.2"/></svg>
<div class="a" style="left:523px;top:402px;width:15px;height:15px;border:1px solid #a9a7a4;border-radius:0 3px 3px 0;background:linear-gradient(#fafafa,#e4e3e1)"></div>
<svg class="a" style="left:528px;top:405px" width="6" height="9"><path d="M1 1L4.5 4.5L1 8" stroke="#333" fill="none" stroke-width="1.3"/></svg>

<div class="t tr" style="left:269px;top:429px">Color Spectrum Browser</div>
<div class="a" style="left:268px;top:451px;width:750px;height:126px;border-left:1px solid #000;border-right:1px solid #000;background:linear-gradient(#f8f8f8,rgba(248,248,248,0) 50%,rgba(0,0,0,0) 50%,#000),linear-gradient(90deg,#f00,#ff0 16.67%,#0f0 33.33%,#0ff 50%,#00f 66.67%,#f0f 83.33%,#f00)"></div>
<canvas id="spec" class="a" width="750" height="126" style="left:268px;top:451px"></canvas>

<!-- bottom panel -->
<svg class="a" style="left:255px;top:604px" width="835" height="135">
<defs><linearGradient id="tabw" x1="0" y1="0" x2="0" y2="1"><stop offset="0" stop-color="#fdfdfd"/><stop offset="1" stop-color="#e9e8e7"/></linearGradient></defs>
<path d="M5.5 130.5V11.5Q5.5 5.5 11.5 5.5H823.5Q829.5 5.5 829.5 11.5V130.5Z" fill="#edeceb" stroke="#a9a7a4"/>
<path d="M6 36.5V12Q6 6 12 6H145Q155 6 165 19Q176 36.5 186 36.5H829V37H6Z" fill="url(#tabw)"/>
<path d="M145 5.5Q155 5.5 165 19Q176 36.5 186 36.5H829" stroke="#a9a7a4" fill="none"/>
</svg>
<svg class="a" style="left:266px;top:618px" width="14" height="14"><rect x=".5" y="1.5" width="12" height="11" fill="#eaf4fc" stroke="#4a6aa0"/><rect x="1" y="2" width="11" height="2.5" fill="#3a7ad0"/><path d="M.5 4.5V12.5" stroke="#c0a050"/></svg>
<div class="t tr" style="left:283px;top:618px;letter-spacing:-.22px">File Comparison</div>
<svg class="a" style="left:395px;top:619px" width="12" height="12"><path d="M8.4 0.9L10.9 3.3L8.1 6.0L10.9 8.7L8.5 11.1L6.0 8.4L3.3 11.1L0.9 8.6L3.6 6.0L0.9 3.4L3.4 0.9L6.0 3.6Z" fill="#fff" stroke="#111" stroke-width="1" stroke-linejoin="round"/></svg>
<div class="t" style="left:1008.5px;top:616px;font-family:'Liberation Serif';font-weight:bold;font-size:17px;color:#0d4f9e">i</div>
<div class="t" style="left:1036.5px;top:616px;font-family:'Liberation Serif';font-weight:bold;font-size:17px;color:#0d4f9e">i</div>
<svg class="a" style="left:1061px;top:617px" width="12" height="7"><path d="M1 1H11L6 6Z" fill="none" stroke="#111" stroke-width="1.4" stroke-linejoin="round"/></svg>
<div class="t tr" style="left:267px;top:652px">Folder to compare:</div>
<div class="a" style="left:268px;top:676px;width:738px;height:29px;border:1px solid #a4a3a1;border-radius:3px;background:#fff;box-shadow:inset 0 1px 1px rgba(0,0,0,.08)"></div>
<div class="btn a" style="left:1013px;top:675px;width:63px;height:31px;border-radius:4px"></div>
<div class="t" style="left:1038px;top:684px;font-size:14px;color:#1a1a1a">...</div>
<div class="t tr" style="left:267px;top:716px;letter-spacing:-.09px">File extensions (CSV):</div>
<div class="a" style="left:5px;top:734px;width:252px;height:1px;background:#a9a7a4"></div>

<!-- status -->
<div class="grip a" style="left:7px;top:739px;height:28px"></div>
<svg class="a" style="left:21px;top:745px" width="16" height="15"><rect x=".5" y="3.5" width="5" height="11" fill="#eaf4fc" stroke="#8a8a70"/><rect x="1" y="4" width="4" height="2" fill="#3a7ad0"/><path d="M11 0L14 3L11 6L8 3Z" fill="#f8e8a0" stroke="#a08010" stroke-width=".9"/></svg>
<svg class="a" style="left:87px;top:741px" width="15" height="18"><path d="M1.5 1.5H10L13.5 5V16.5H1.5Z" fill="#f6f6f6" stroke="#bdbab5"/><path d="M10 1.5L13.5 5" stroke="#8aa0c0"/><rect x="5" y="4" width="4.5" height="1.5" fill="#e8201a"/><rect x="4" y="5.5" width="8" height="3.5" fill="#e8922c"/><rect x="5" y="6.5" width="1.5" height="1.5" fill="#8a5010"/><rect x="8.5" y="7" width="2.5" height="1.5" fill="#8a5010"/><path d="M6 9H11.5V15H4.5V11.5H6Z" fill="#f01010"/><rect x="1.5" y="9" width="6.5" height="2.5" fill="#a8701e"/><rect x="2.5" y="11.5" width="2" height="3" fill="#a8701e"/><rect x="1" y="10.5" width="1.8" height="2" fill="#f4a030"/><rect x="7.5" y="10.5" width="1" height="1" fill="#f0c040"/><rect x="10" y="10.5" width="1" height="1" fill="#f0c040"/></svg>
<div class="t tr" style="left:106px;top:744px;letter-spacing:.05px">safddfsdsafdsfdsafdsafdsafdsafdf/Tilesets/testtiles.tile</div>
<div class="a" style="left:595px;top:739px;width:2px;height:27px;background:#b8b6b3;border-right:1px solid #fff"></div>
<div class="grip a" style="left:923px;top:739px;height:27px"></div>
<svg class="a" style="left:926px;top:736px" width="164" height="36"><path d="M4.5 36V7.5Q4.5 1.5 10.5 1.5H162.5V36" fill="none" stroke="#b4b2af"/></svg>
<svg class="a" style="left:939px;top:745px" width="19" height="15"><path d="M1 6L5 2H9L11 4L7 8H3Z" fill="#f0f0f0" stroke="#8a8a8a"/><rect x="8.5" y="6.5" width="8" height="7" fill="#e8c060" stroke="#a07a20"/></svg>
<div class="a" style="left:967px;top:741px;width:1px;height:21px;background:#c4c2bf"></div>
<svg class="a" style="left:979px;top:744px" width="18" height="17"><circle cx="8.5" cy="7.5" r="6" fill="#c8e0f8" stroke="#8aa0c0"/><circle cx="7" cy="6" r="2.5" fill="#f4faff"/><path d="M14 3Q16 9 11 13M5 15H12" stroke="#c09030" stroke-width="1.5" fill="none"/></svg>
<svg class="a" style="left:1008px;top:745px" width="17" height="15"><rect x=".5" y="1.5" width="15" height="12" fill="#fff" stroke="#6a6a6a"/><rect x="1" y="2" width="14" height="2" fill="#8aa0c0"/><path d="M3 8L6 11L11 5" stroke="#10a020" stroke-width="1.6" fill="none"/><path d="M10 9L15 14" stroke="#555" stroke-width="1.2"/></svg>
<svg class="a" style="left:1036px;top:744px" width="18" height="17"><circle cx="5" cy="6" r="4" fill="#3a80d0"/><path d="M11 2Q16 6 11 10Q8 6 11 2Z" fill="#60c040"/><circle cx="9.5" cy="12" r="4" fill="#f8a020"/></svg>
<svg class="a" style="left:1063px;top:744px" width="18" height="18"><path d="M9 1Q10 8 17 9Q10 10 9 17Q8 10 1 9Q8 8 9 1Z" fill="#fcf0c0" stroke="#c09020" stroke-width="1.2"/></svg>

<!-- window border -->
<div class="a" style="left:0;top:0;width:1px;height:772px;background:#9a9a9a"></div>
<div class="a" style="left:1089px;top:0;width:1px;height:772px;background:#8a8a8a"></div>
<div class="a" style="left:0;top:771px;width:1090px;height:1px;background:#8a8a8a"></div>
<script>
(function(){
var c=document.getElementById('spec'),x=c.getContext('2d');
var W=750,H=126,B=4;
var hue=[[255,0,0],[255,255,0],[0,255,0],[0,255,255],[0,0,255],[255,0,255],[255,0,0]];
var img=x.createImageData(W,H);
function col(px,py){
  var s=px/125, i=Math.min(5,Math.floor(s)), u=s-i;
  var C0=hue[i],C1=hue[i+1],out=[0,0,0];
  var top=py<63, v=top?py/63:(py-63)/63;
  for(var k=0;k<3;k++){
    var w=248,kk=0,a=C0[k],b=C1[k],r;
    if(i%2==0){
      if(top){ r = (v<u)? w+(b-w)*v : w+(b-a)*u+(a-w)*v; }
      else { r = (v<u)? a+(b-a)*u+(kk-b)*v : a*(1-v); }
    } else {
      if(top){ r = (u+v<1)? w+(a-w)*v : (w-b+a)+(b-a)*u+(b-w)*v; }
      else { r = (u+v<1)? a+(b-a)*u+(kk-a)*v : b*(1-v); }
    }
    out[k]=Math.max(0,Math.min(255,Math.round(r)));
  }
  return out;
}
for(var py=0;py<H;py++){
  var by=Math.max(0,Math.floor((py-1)/2)*2+2);
  for(var px=0;px<W;px++){
    var bx=Math.max(0,Math.min(W-1,Math.floor((px-1)/B)*B+1+B/2));
    var o=col(bx,Math.min(H,by)),p=(py*W+px)*4;
    img.data[p]=o[0];img.data[p+1]=o[1];img.data[p+2]=o[2];img.data[p+3]=255;
  }
}
x.putImageData(img,0,0);
x.fillStyle='#000';x.fillRect(0,0,1,H);x.fillRect(W-1,0,1,H);x.fillRect(5,0,4,1);
})();
</script>
</body></html>
